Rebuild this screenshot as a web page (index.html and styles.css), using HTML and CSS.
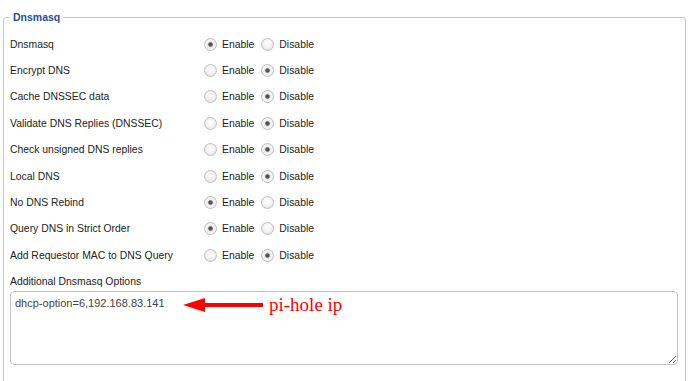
FILE: index.html
```html
<!DOCTYPE html>
<html>
<head>
<meta charset="utf-8">
<link rel="stylesheet" href="styles.css">
</head>
<body>
<fieldset class="box">
  <legend class="legend">Dnsmasq</legend>
  <div class="rows">
    <div class="row"><span class="label">Dnsmasq</span><label class="opt"><input type="radio" name="r1" checked>Enable</label><label class="opt"><input type="radio" name="r1">Disable</label></div>
    <div class="row"><span class="label">Encrypt DNS</span><label class="opt"><input type="radio" name="r2">Enable</label><label class="opt"><input type="radio" name="r2" checked>Disable</label></div>
    <div class="row"><span class="label">Cache DNSSEC data</span><label class="opt"><input type="radio" name="r3">Enable</label><label class="opt"><input type="radio" name="r3" checked>Disable</label></div>
    <div class="row"><span class="label">Validate DNS Replies (DNSSEC)</span><label class="opt"><input type="radio" name="r4">Enable</label><label class="opt"><input type="radio" name="r4" checked>Disable</label></div>
    <div class="row"><span class="label">Check unsigned DNS replies</span><label class="opt"><input type="radio" name="r5">Enable</label><label class="opt"><input type="radio" name="r5" checked>Disable</label></div>
    <div class="row"><span class="label">Local DNS</span><label class="opt"><input type="radio" name="r6">Enable</label><label class="opt"><input type="radio" name="r6" checked>Disable</label></div>
    <div class="row"><span class="label">No DNS Rebind</span><label class="opt"><input type="radio" name="r7" checked>Enable</label><label class="opt"><input type="radio" name="r7">Disable</label></div>
    <div class="row"><span class="label">Query DNS in Strict Order</span><label class="opt"><input type="radio" name="r8" checked>Enable</label><label class="opt"><input type="radio" name="r8">Disable</label></div>
    <div class="row"><span class="label">Add Requestor MAC to DNS Query</span><label class="opt"><input type="radio" name="r9">Enable</label><label class="opt"><input type="radio" name="r9" checked>Disable</label></div>
  </div>
  <div class="extra">
    <div class="extra-label">Additional Dnsmasq Options</div>
    <div class="area-wrap">
      <textarea class="area">dhcp-option=6,192.168.83.141</textarea>
      <div class="note">
        <svg class="arrow" width="80" height="14" viewBox="0 0 80 14"><polygon points="0,7 22,0 22,5 80,5 80,9 22,9 22,14" fill="#ff0000"/></svg>
        <span class="note-text">pi-hole ip</span>
      </div>
    </div>
  </div>
</fieldset>
</body>
</html>
```
FILE: styles.css
```css
html, body {
  margin: 0;
  padding: 0;
  background: #fff;
}
body {
  font-family: "Liberation Sans", Arial, sans-serif;
  font-size: 10.4px;
  color: #222;
  padding: 11px 4px 0 3px;
}
.box {
  margin: 0;
  border: 1px solid #c8c8c8;
  border-radius: 3px;
  padding: 8px 6px 20px 6px;
  min-width: 0;
}
.legend {
  color: #1f4f9a;
  font-weight: bold;
  font-size: 10.5px;
  padding: 0 3px;
  margin-left: 0;
}
.rows {
  display: flex;
  flex-direction: column;
}
.row {
  display: flex;
  align-items: center;
  height: 26.4px;
}
.label {
  width: 194px;
}
.opt {
  display: flex;
  align-items: center;
  margin-right: 7px;
}
.opt input {
  appearance: none;
  -webkit-appearance: none;
  width: 13px;
  height: 13px;
  margin: 0 5px 0 0;
  border: 1px solid #c0c0c0;
  border-radius: 50%;
  background: radial-gradient(circle at 50% 40%, #ffffff 0%, #f4f4f4 45%, #dcdcdc 100%);
  box-sizing: border-box;
}
.opt input:checked {
  background: radial-gradient(circle at 50% 50%, #4a4a4a 0%, #5a5a5a 22%, #e8e8e8 36%, #f6f6f6 60%, #d6d6d6 100%);
}
.extra {
  margin-top: 7px;
}
.extra-label {
  margin-bottom: 4px;
}
.area-wrap {
  position: relative;
}
.area {
  display: block;
  width: calc(100% - 1px);
  box-sizing: border-box;
  height: 74px;
  border: 1px solid #c4c4c4;
  border-radius: 4px;
  font-family: "Liberation Sans", Arial, sans-serif;
  font-size: 11px;
  color: #444;
  padding: 5px 4px;
  resize: vertical;
}
.note {
  position: absolute;
  left: 173px;
  top: 3px;
  display: flex;
  align-items: center;
  gap: 6px;
}
.note-text {
  font-family: "Liberation Serif", "Times New Roman", serif;
  font-size: 19px;
  color: #ff0000;
}
```
